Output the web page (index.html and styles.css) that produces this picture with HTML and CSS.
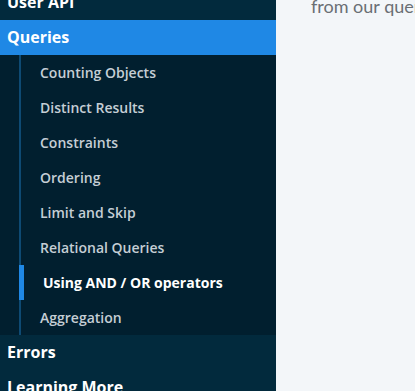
FILE: index.html
```html
<!DOCTYPE html>
<html lang="en">
<head>
  <meta charset="UTF-8" />
  <title>Queries | Docs</title>
  <link rel="stylesheet" href="styles.css">
</head>
<body>
  <div class="layout">
    <nav class="sidebar">
      <a href="#" class="nav-top">User API</a>
      <a href="#" class="nav-top activo">Queries</a>
      <div class="submenu">
        <a href="#" class="sub-item">Counting Objects</a>
        <a href="#" class="sub-item">Distinct Results</a>
        <a href="#" class="sub-item">Constraints</a>
        <a href="#" class="sub-item">Ordering</a>
        <a href="#" class="sub-item">Limit and Skip</a>
        <a href="#" class="sub-item">Relational Queries</a>
        <a href="#" class="sub-item atual">Using AND / OR operators</a>
        <a href="#" class="sub-item">Aggregation</a>
      </div>
      <a href="#" class="nav-top">Errors</a>
      <a href="#" class="nav-top">Learning More</a>
    </nav>
    <main class="conteudo">
      <p>from our query engine, and you can</p>
    </main>
  </div>
</body>
</html>
```

FILE: styles.css
```css
body {
  margin: 0;
  padding: 0;
  background-color: #f3f6f9;
  font-family: 'Open Sans', 'Noto Sans', sans-serif;
  overflow: hidden;
}

.layout {
  display: flex;
  height: 391px;
}

.sidebar {
  width: 276px;
  flex-shrink: 0;
  background-color: #022a3d;
  display: flex;
  flex-direction: column;
  margin-top: -15px;
}

.nav-top {
  display: block;
  height: 35px;
  line-height: 35px;
  padding-left: 7px;
  color: white;
  font-weight: bold;
  font-size: 16px;
  text-decoration: none;
  flex-shrink: 0;
}

.nav-top.activo {
  background-color: #1f88e5;
}

.submenu {
  background-color: #011f2f;
  display: flex;
  flex-direction: column;
  flex-shrink: 0;
}

.sub-item {
  display: block;
  height: 35px;
  line-height: 35px;
  margin-left: 19px;
  padding-left: 19px;
  border-left: 2px solid #0e4a73;
  color: #c5ced5;
  font-size: 14px;
  font-weight: 600;
  text-decoration: none;
}

.sub-item.atual {
  border-left: 5px solid #1f88e5;
  padding-left: 19px;
  color: white;
  font-weight: bold;
}

.conteudo {
  flex: 1;
  padding-left: 35px;
}

.conteudo p {
  margin: -5px 0 0;
  font-family: 'Lato', sans-serif;
  font-size: 18px;
  color: #6a6f74;
  white-space: nowrap;
}
```
